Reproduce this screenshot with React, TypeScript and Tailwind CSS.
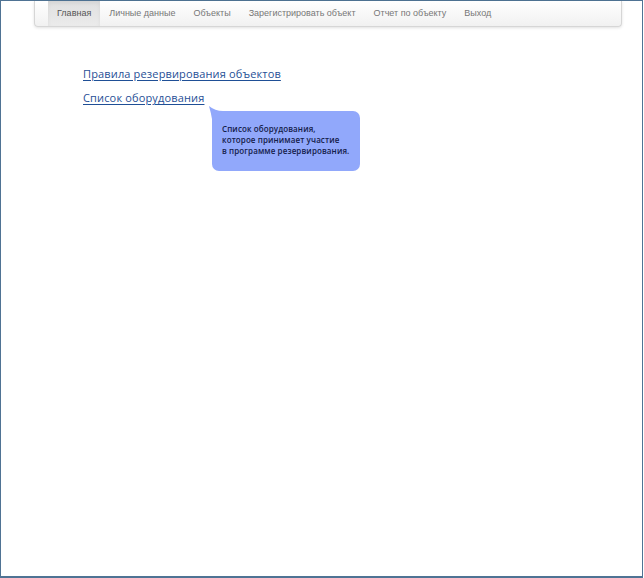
const navItems = [
  "Главная",
  "Личные данные",
  "Объекты",
  "Зарегистрировать объект",
  "Отчет по объекту",
  "Выход",
];

export default function App() {
  return (
    <div className="w-[644px] h-[578px] bg-white">
      <div className="w-[643px] h-[578px] border-[1.5px] border-[#4f7394] border-b-2 relative">
        {/* Top navigation bar */}
        <div className="ml-[33px] w-[588px] h-[26px] flex items-stretch pl-[13px] rounded-b-[4px] border border-t-0 border-[#d6d6d6] bg-gradient-to-b from-white to-[#f1f1f1] shadow-[0_1px_3px_rgba(0,0,0,0.12)] font-['Liberation_Sans',Arial,sans-serif] text-[9px] text-[#777]">
          {navItems.map((item, i) => (
            <div
              key={item}
              className={
                i === 0
                  ? "flex items-center px-[9px] bg-gradient-to-b from-[#e0e0e0] to-[#ebebeb] text-[#555] shadow-[inset_0_2px_4px_rgba(0,0,0,0.06)]"
                  : "flex items-center px-[9px]"
              }
            >
              {item}
            </div>
          ))}
        </div>

        {/* Links */}
        <div className="ml-[82px] mt-[39px] flex flex-col items-start gap-[8px] font-['Open_Sans',sans-serif] text-[11px] leading-[16px] tracking-[0.15px] text-[#1f4f96]">
          <a href="#" className="underline underline-offset-2 decoration-[#1f4f96]">
            Правила резервирования объектов
          </a>
          <div className="relative">
            <a href="#" className="underline underline-offset-2 decoration-[#1f4f96]">
              Список оборудования
            </a>
            {/* Callout bubble */}
            <div className="absolute left-[129px] top-[21px] w-[148px] h-[60px] rounded-[7px] bg-[#91a8fb] pl-[10px] pt-[12px] font-['Open_Sans',sans-serif] text-[8px] font-semibold leading-[11px] tracking-[0.1px] text-[#14204a]">
              <svg
                className="absolute -left-[4px] -top-[5px]"
                width="16"
                height="16"
                viewBox="0 0 16 16"
              >
                <path d="M1 0 Q3 7 4 13 L4 16 L15 5 Q7 5 1 0 Z" fill="#91a8fb" />
              </svg>
              <div className="relative">
                Список оборудования,
                <br />
                которое принимает участие
                <br />в программе резервирования.
              </div>
            </div>
          </div>
        </div>
      </div>
    </div>
  );
}
